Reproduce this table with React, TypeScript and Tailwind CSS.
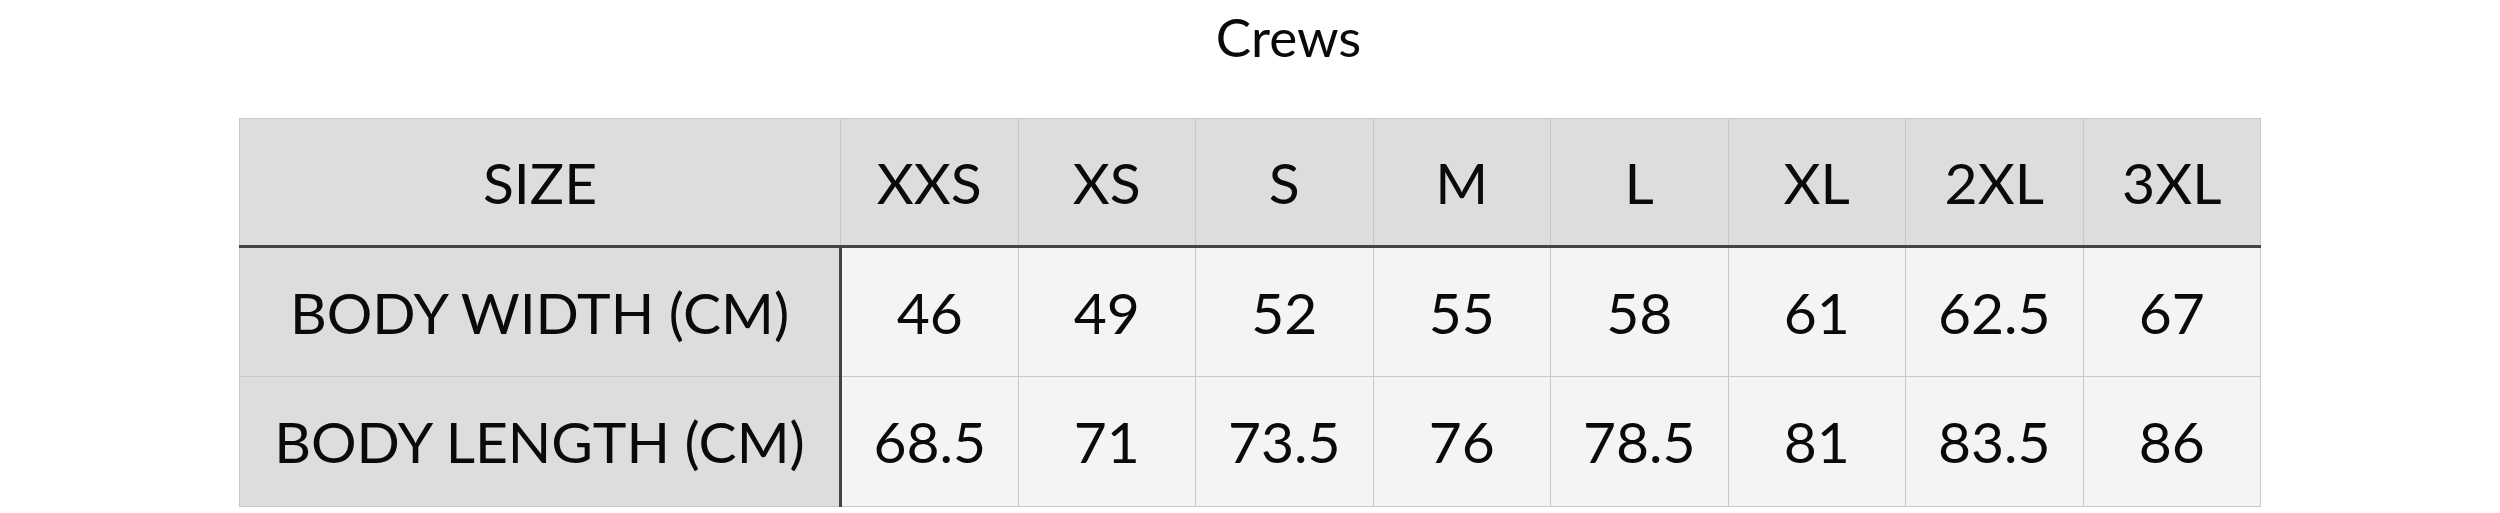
const sizes = ["XXS", "XS", "S", "M", "L", "XL", "2XL", "3XL"];

const rows = [
  { label: "BODY WIDTH (CM)", values: ["46", "49", "52", "55", "58", "61", "62.5", "67"] },
  { label: "BODY LENGTH (CM)", values: ["68.5", "71", "73.5", "76", "78.5", "81", "83.5", "86"] },
];

export default function App() {
  return (
    <div className="w-[2500px] h-[513px] bg-white text-[#0a0a0a] font-['Lato',sans-serif]">
      <h2 className="pt-[10px] pl-[77px] mb-[55px] text-center text-[53px] leading-none font-normal">Crews</h2>

      <table className="mx-auto w-[2022px] table-fixed border-collapse text-[57px] leading-none">
        <colgroup>
          <col className="w-[601px]" />
          {sizes.map((s) => (
            <col key={s} />
          ))}
        </colgroup>
        <thead>
          <tr className="h-[128px] bg-[#dddddd]">
            <th className="border border-[#c8c8c8] border-b-[3px] border-b-[#444] font-normal">SIZE</th>
            {sizes.map((s) => (
              <th key={s} className="border border-[#c8c8c8] border-b-[3px] border-b-[#444] font-normal">
                {s}
              </th>
            ))}
          </tr>
        </thead>
        <tbody>
          {rows.map((row) => (
            <tr key={row.label} className="h-[130px]">
              <td className="border border-[#c8c8c8] border-r-[3px] border-r-[#444] bg-[#dddddd] text-center">
                {row.label}
              </td>
              {row.values.map((v, i) => (
                <td key={i} className="border border-[#c8c8c8] bg-[#f4f4f4] text-center">
                  {v}
                </td>
              ))}
            </tr>
          ))}
        </tbody>
      </table>
    </div>
  );
}
